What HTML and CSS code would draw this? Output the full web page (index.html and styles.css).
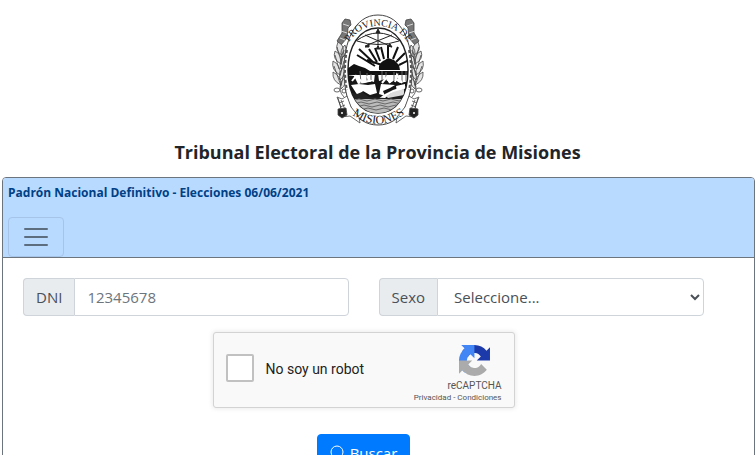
FILE: index.html
```html
<!DOCTYPE html>
<html lang="es">
<head>
<meta charset="utf-8">
<meta name="viewport" content="width=device-width, initial-scale=1">
<title>Tribunal Electoral de la Provincia de Misiones</title>
<link rel="stylesheet" href="styles.css">
</head>
<body>
<header class="masthead">
  <svg class="emblem" viewBox="0 0 116 130" role="img" aria-label="Escudo de la Provincia de Misiones">
    <defs>
      <path id="arc-top" d="M25 48C33 12 83 12 92 48"/>
      <path id="arc-bottom" d="M22 101Q58 137 95 100"/>
      <path id="oval" d="M58 23C77 23 88 42 88 65C88 90 77 108 58 108C39 108 28 90 28 65C28 42 39 23 58 23z"/>
      <clipPath id="field"><use href="#oval"/></clipPath>
      <g id="branch" fill="#e4e4e4" stroke="#444" stroke-width=".8">
        <path d="M22 18l3-4 5 1 1 5-3 3-1 10-6 7-4-4 5-8z" fill="#777"/>
        <path d="M23 19l6 2M21 26l6 2M20 33l5 2" stroke="#eee"/>
        <path d="M18 37q8 4 4 13q-8-4-4-13zM25 40q3 7-3 13q-3-8 3-13zM15 46q8 4 6 13q-9-5-6-13zM25 50q3 8-4 14q-3-9 4-14zM13 56q8 4 7 14q-9-5-7-14zM25 61q2 8-5 14q-2-9 5-14zM13 67q8 4 8 13q-9-4-8-13zM26 72q1 7-5 12q-2-8 5-12z"/>
        <path d="M17 42l4 14M15 50l4 14M14 61l6 17M24 45l-3 15M24 56l-4 15M24 67l-3 14" fill="none"/>
        <path d="M21 78q-3 8 3 14M14 85a3 2 0 1 0 6 0a3 2 0 1 0-6 0M22 86a2 2 0 1 0 4 0a2 2 0 1 0-4 0" fill="none"/>
      </g>
      <g id="ribbon" fill="#fff" stroke="#444" stroke-width=".8">
        <path d="M17 92l5 2 5-3 4 11 8 10 1 6-10-7-9 1-2-7 2-3z"/>
        <path d="M18 93l4 14M21 95l5 12M19 98l5-2M20 102l5-2" fill="none"/>
        <path d="M18 104l8-1 1 7-5 3-4-3z" fill="#222"/>
        <circle cx="22" cy="108" r="1" stroke="none"/>
      </g>
    </defs>
    <use href="#branch"/>
    <use href="#branch" transform="matrix(-1 0 0 1 116 0)"/>
    <path d="M58 10C82 10 92 38 92 65C92 96 82 120 58 120C34 120 24 96 24 65C24 38 34 10 58 10z" fill="#fff" stroke="#444"/>
    <path d="M27 45q-4 20 0 40M89 45q4 20 0 40" fill="none" stroke="#555" stroke-width="2" stroke-dasharray="3 2"/>
    <use href="#ribbon"/>
    <use href="#ribbon" transform="matrix(-1 0 0 1 116 0)"/>
    <use href="#oval" fill="#fff" stroke="#222" stroke-width="1.5"/>
    <g clip-path="url(#field)">
      <path d="M55 61L37 50M54 58L39 44M57 57L49 44M60 56L55 43M64 54L61 42M68 53V40M73 54L78 42M76 57L85 48M79 60L89 55M62 60L47 55" stroke="#111" stroke-width="2" fill="none"/>
      <path d="M59 65q-1-6 4-9l2-1 3-2 3 1 3 1 3 3 2 2 1 5z" fill="#111"/>
      <path d="M27 64l7-5 5 2 6 2 5 3h39v4H27z" fill="#111"/>
      <path d="M40 66l1 13M47 68v9M51 69v6M62 66v14M66 67v8M74 67v12M78 68v6M82 66v13M86 66v10" stroke="#666" stroke-width="1"/>
      <path d="M27 70l7 1 4 8 7-1 6-2 3 1 1-9h3l1 8 6-2 5 4 5-3 5 3 9-2v5l-7 1-9 3-8 4-7 5-5 3-4 4H28z" fill="#161616"/>
      <path d="M32 76l4-5 6 6 8-1-3-5M62 78l5-6 3 6M75 77l2-7 5 8" fill="none" stroke="#fff" stroke-width="2"/>
      <path d="M31 80l8-1 9 1 7-1 2 9-7 2-7-4-5 5M61 79l14 1-5 3-7 3 2 5-6-2M76 81l9-2v4l-8 4" fill="#fff"/>
      <path d="M29 87l8 2 5-2 7 5 16 1 5-4 7-2 10-4v11H28z" fill="#222"/>
      <path d="M66 91l7-4 11-3v6l-16 3z" fill="#ddd"/>
      <path d="M27 94h62v16H27z" fill="#bbb"/>
      <path d="M27 95q4 2 8 0t8 0 8 0 8 0 8 0 8 0 8 0 8 0M29 98q4 2 8 0t8 0 8 0 8 0 8 0 8 0 8 0M32 101q4 2 8 0t8 0 8 0 8 0 8 0 8 0M36 104q4 2 8 0t8 0 8 0 8 0 8 0" fill="none" stroke="#666"/>
    </g>
    <g fill="none" stroke="#222" stroke-width="1">
      <path d="M58 25v19M36 36q22-16 44 0M37 36q21 7 42 0M45 41l27-11M45 30l27 12"/>
      <path d="M58 24l-2 4h4zM45 42l4-3v3zM72 42l-5-1 3-2zM56 44h4l-2-3z" fill="#222"/>
    </g>
    <g class="emblem-text">
      <text><textPath href="#arc-top" startOffset="50%" text-anchor="middle">PROVINCIA DE</textPath></text>
      <text class="emblem-name"><textPath href="#arc-bottom" startOffset="50%" text-anchor="middle">MISIONES</textPath></text>
    </g>
  </svg>
  <h1 class="title">Tribunal Electoral de la Provincia de Misiones</h1>
</header>
<main class="card">
  <div class="card-header">
    <h2 class="subtitle">Padrón Nacional Definitivo - Elecciones 06/06/2021</h2>
    <button class="toggler" type="button" aria-label="Menú">
      <svg viewBox="0 0 30 30" width="30" height="30"><path d="M4 7h22M4 15h22M4 23h22" stroke="currentColor" stroke-width="2" stroke-linecap="round"/></svg>
    </button>
  </div>
  <form class="card-body">
    <div class="fields">
      <div class="group">
        <label class="addon" for="dni">DNI</label>
        <input class="control" id="dni" type="text" placeholder="12345678">
      </div>
      <div class="group">
        <label class="addon" for="sexo">Sexo</label>
        <select class="control select" id="sexo"><option>Seleccione...</option></select>
      </div>
    </div>
    <div class="captcha">
      <input class="captcha-check" id="robot" type="checkbox">
      <label class="captcha-label" for="robot">No soy un robot</label>
      <div class="captcha-brand">
        <svg viewBox="0 0 64 64" width="31" height="31" aria-hidden="true">
          <path fill="#1c3aa9" d="M64 31.955l-.033-1.37V4.687l-7.16 7.16C50.948 4.674 42.033.093 32.05.093c-10.4 0-19.622 4.96-25.458 12.64l11.736 11.86a15.55 15.55 0 0 1 4.754-5.334c2.05-1.6 4.952-2.906 8.968-2.906.485 0 .86.057 1.135.163 4.976.393 9.288 3.14 11.828 7.124l-8.307 8.307L64 31.953"/>
          <path fill="#4285f4" d="M31.862.094l-1.37.033H4.594l7.16 7.16C4.58 13.147 0 22.06 0 32.046c0 10.4 4.96 19.622 12.64 25.458L24.5 45.768a15.55 15.55 0 0 1-5.334-4.754c-1.6-2.05-2.906-4.952-2.906-8.968 0-.485.057-.86.163-1.135.393-4.976 3.14-9.288 7.124-11.828l8.307 8.307L31.86.095"/>
          <path fill="#ababab" d="M.001 32.045l.033 1.37v25.898l7.16-7.16c5.86 7.173 14.774 11.754 24.76 11.754 10.4 0 19.622-4.96 25.458-12.64l-11.736-11.86a15.55 15.55 0 0 1-4.754 5.334c-2.05 1.6-4.952 2.906-8.968 2.906-.485 0-.86-.057-1.135-.163-4.976-.393-9.288-3.14-11.828-7.124l8.307-8.307c-10.522.04-22.4.066-27.295-.005"/>
        </svg>
        <span class="captcha-name">reCAPTCHA</span>
        <span class="captcha-links"><a href="#">Privacidad</a> - <a href="#">Condiciones</a></span>
      </div>
    </div>
    <button class="search" type="submit">
      <svg viewBox="0 0 16 16" width="16" height="16" aria-hidden="true"><circle cx="7" cy="7" r="6" fill="none" stroke="currentColor"/><path d="M11 11l4 4" stroke="currentColor" stroke-width="2"/></svg>
      Buscar
    </button>
  </form>
</main>
</body>
</html>
```
FILE: styles.css
```css
* { box-sizing: border-box; }
html { overflow: hidden; }
body {
  margin: 0;
  font: 16px/24px "Open Sans", "Noto Sans", sans-serif;
  color: #212529;
  background: #fff;
}
.masthead {
  display: flex;
  flex-direction: column;
  align-items: center;
  padding: 5px 0 13px;
}
.emblem { width: 116px; height: 130px; }
.emblem-text { font: 10px "Liberation Serif", serif; fill: #222; }
.emblem-name { font-size: 12px; }
.title { margin: 5px 0 0; font-size: 18px; line-height: 24px; font-weight: 700; }
.card { margin-left: 2px; border: 1px solid #6c757d; border-radius: 4px; }
.card-header {
  background: #b8daff;
  border-bottom: 1px solid #6c757d;
  border-radius: 3px 3px 0 0;
  padding: 5px 5px 0;
}
.subtitle { margin: 0 0 14px; font-size: 12px; line-height: 20px; font-weight: 700; color: #004085; }
.toggler {
  display: flex;
  align-items: center;
  justify-content: center;
  width: 56px;
  height: 40px;
  padding: 0;
  border: 1px solid #a5c4e7;
  border-radius: 4px;
  background: transparent;
  color: #5c6d80;
}
.card-body {
  display: flex;
  flex-direction: column;
  align-items: center;
  padding: 20px 50px 20px 20px;
}
.fields { display: grid; grid-template-columns: 1fr 1fr; gap: 30px; width: 100%; }
.group { display: flex; height: 38px; }
.addon {
  padding: 6px 12px;
  border: 1px solid #ced4da;
  border-right: 0;
  border-radius: 4px 0 0 4px;
  background: #e9ecef;
  color: #495057;
  font-size: 15px;
}
.control {
  flex: 1;
  min-width: 0;
  padding: 6px 12px;
  border: 1px solid #ced4da;
  border-radius: 0 4px 4px 0;
  background: #fff;
  color: #495057;
  font: inherit;
  font-size: 15px;
}
.control::placeholder { color: #6c757d; opacity: 1; }
.select { padding: 6px 0 6px 12px; }
.captcha {
  display: flex;
  align-items: center;
  width: 302px;
  height: 76px;
  margin: 16px 0 26px;
  padding: 0 12px;
  border: 1px solid #d3d3d3;
  border-radius: 3px;
  background: #f9f9f9;
  box-shadow: 0 0 4px 1px rgba(0, 0, 0, .08);
  font-family: Roboto, sans-serif;
}
.captcha-check {
  appearance: none;
  width: 28px;
  height: 28px;
  margin: 0 12px 4px 0;
  border: 2px solid #c1c1c1;
  border-radius: 2px;
  background: #fff;
}
.captcha-label { flex: 1; margin-bottom: 2px; font-size: 14px; color: #222; }
.captcha-brand { display: flex; flex-direction: column; align-items: flex-end; padding-top: 8px; color: #555; }
.captcha-brand svg { margin-right: 12px; }
.captcha-name { margin-top: 4px; font-size: 10px; line-height: 12px; }
.captcha-links { font-size: 8px; line-height: 12px; }
.captcha-links a { color: inherit; text-decoration: none; }
.search {
  display: flex;
  align-items: center;
  gap: 4px;
  height: 38px;
  padding: 6px 12px;
  border: 1px solid #007bff;
  border-radius: 4px;
  background: #007bff;
  color: #fff;
  font: inherit;
  font-size: 15px;
}
```
